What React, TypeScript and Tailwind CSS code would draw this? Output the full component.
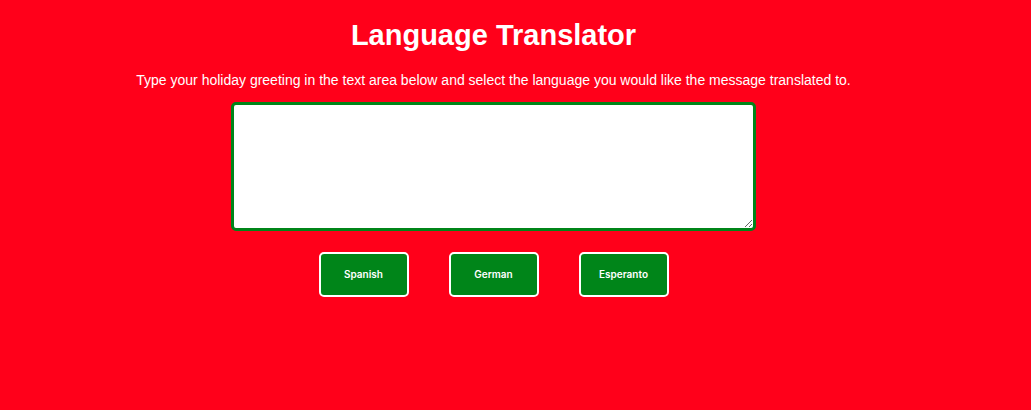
import { useState } from "react";

const languages = ["Spanish", "German", "Esperanto"];

export default function App() {
  const [message, setMessage] = useState("");

  return (
    <div className="min-h-screen bg-[#ff001a] pr-11 font-['Liberation_Sans',Arial,sans-serif] text-white">
      <main className="flex flex-col items-center pt-4">
        <h1 className="text-[29px] leading-[38px] font-bold">Language Translator</h1>
        <label htmlFor="message" className="mt-4 text-center text-sm leading-5">
          Type your holiday greeting in the text area below and select the language you would like the message translated to.
        </label>
        <textarea
          id="message"
          value={message}
          onChange={(event) => setMessage(event.target.value)}
          className="mt-3 h-[129px] w-[525px] max-w-full resize rounded-[5px] border-3 border-[#008519] bg-white p-1 text-sm text-black outline-none"
        />
        <div className="mt-[21px] flex gap-10">
          {languages.map((language) => (
            <button
              key={language}
              type="button"
              className="h-[45px] w-[90px] rounded-[5px] border-2 border-white bg-[#008519] font-[Inter,sans-serif] text-[10px] font-semibold text-white"
            >
              {language}
            </button>
          ))}
        </div>
      </main>
    </div>
  );
}
